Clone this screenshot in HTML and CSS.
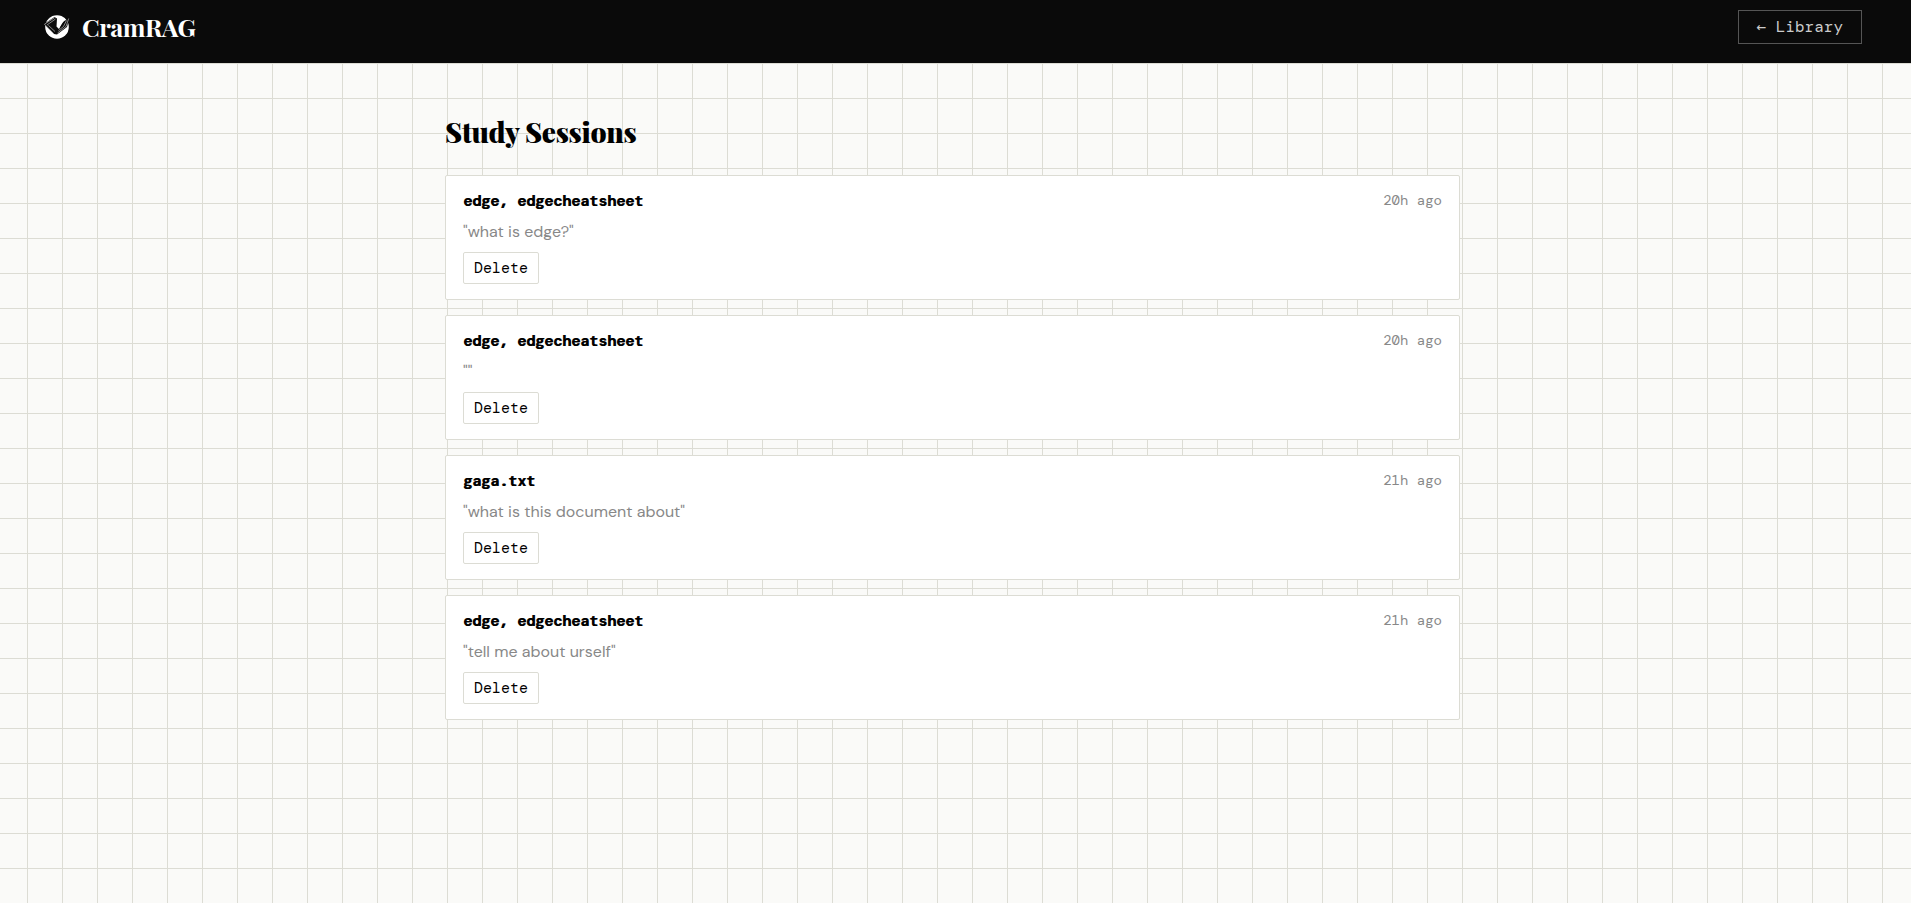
FILE: index.html
```html
<!DOCTYPE html>
<html lang="en">
<head>
<meta charset="utf-8">
<meta name="viewport" content="width=device-width, initial-scale=1">
<title>CramRAG – Study Sessions</title>
<link rel="stylesheet" href="styles.css">
</head>
<body>
<header class="topbar">
  <div class="brand">
    <svg class="brand-mark" viewBox="0 0 26 26" aria-hidden="true">
      <circle cx="13" cy="13" r="11.800" fill="#fff"/>
      <path d="M0 10 10.500 3 13 4.500 12.500 12.500 15 15 18.500 8 25.500 4 23 13 13 20.500 10 20Z" fill="#0a0a0a"/>
      <path d="M13.300 4.500 21 4 19.500 7.500 14.800 14 13.200 12Z" fill="#fff"/>
      <path d="M.5 10.200 10.500 3.800M3 11 11.500 5M.5 10.200 9.800 19.800M4.500 11.500 11 17.500M24.700 4.500 22 12.500 13.500 19M22.500 6.500 19.500 12.500 14.500 16.500" fill="none" stroke="#bbb" stroke-width=".7"/>
    </svg>
    <span class="brand-name">CramRAG</span>
  </div>
  <a class="library-link" href="#library">← Library</a>
</header>
<main class="sessions">
  <h1 class="sessions-title">Study Sessions</h1>
  <article class="card">
    <div class="card-head"><h2 class="card-title">edge, edgecheatsheet</h2><time class="card-time">20h ago</time></div>
    <p class="card-preview">"what is edge?"</p>
    <button class="delete" type="button">Delete</button>
  </article>
  <article class="card">
    <div class="card-head"><h2 class="card-title">edge, edgecheatsheet</h2><time class="card-time">20h ago</time></div>
    <p class="card-preview">""</p>
    <button class="delete" type="button">Delete</button>
  </article>
  <article class="card">
    <div class="card-head"><h2 class="card-title">gaga.txt</h2><time class="card-time">21h ago</time></div>
    <p class="card-preview">"what is this document about"</p>
    <button class="delete" type="button">Delete</button>
  </article>
  <article class="card">
    <div class="card-head"><h2 class="card-title">edge, edgecheatsheet</h2><time class="card-time">21h ago</time></div>
    <p class="card-preview">"tell me about urself"</p>
    <button class="delete" type="button">Delete</button>
  </article>
</main>
</body>
</html>
```

FILE: styles.css
```css
:root {
  --ink: #0a0a0a;
  --paper: #fafaf8;
  --line: #dcdcd4;
  --muted: #888;
  --mono: "DM Mono", "DejaVu Sans Mono", monospace;
  --sans: "DM Sans", "Open Sans", sans-serif;
  --serif: "Playfair Display", "Liberation Serif", serif;
}

* {
  box-sizing: border-box;
}

body {
  margin: 0;
  min-height: 100vh;
  padding-right: 6px;
  color: var(--ink);
  font-family: var(--sans);
  background-color: var(--paper);
  background-image:
    linear-gradient(var(--line) 1px, transparent 1px),
    linear-gradient(90deg, var(--line) 1px, transparent 1px);
  background-size: 35px 35px;
  background-position: 27px 28px;
}

.topbar {
  display: flex;
  align-items: flex-start;
  justify-content: space-between;
  margin-right: -6px;
  padding: 10px 49px 19px 44px;
  background: var(--ink);
}

.brand {
  display: flex;
  align-items: center;
  gap: 12px;
  padding-top: 1px;
}

.brand-mark {
  width: 26px;
  height: 26px;
}

.brand-name {
  color: #fff;
  font: 700 25px/32px var(--serif);
  letter-spacing: -0.02em;
}

.library-link {
  padding: 0 18px;
  border: 1px solid #555;
  color: #ccc;
  font: 16px/32px var(--mono);
  text-decoration: none;
}

.sessions {
  display: flex;
  flex-direction: column;
  gap: 15px;
  max-width: 1015px;
  margin: 0 auto;
  padding: 49px 0;
}

.sessions-title {
  margin: 0 0 8px;
  color: #000;
  font: 900 28px/40px var(--serif);
  letter-spacing: -0.01em;
}

.card {
  padding: 15px 17px;
  border: 1px solid var(--line);
  border-radius: 2px;
  background: #fff;
}

.card-head {
  display: flex;
  align-items: flex-start;
  justify-content: space-between;
}

.card-title {
  margin: 0;
  color: #000;
  font: 700 15px/20px var(--mono);
  text-shadow: 1px 0 0 #000;
}

.card-time {
  color: var(--muted);
  font: 14px/18px var(--mono);
}

.card-preview {
  margin: 8px 0 7px;
  color: var(--muted);
  font-size: 16px;
  line-height: 26px;
}

.delete {
  display: block;
  padding: 0 10px;
  border: 1px solid var(--line);
  border-radius: 2px;
  background: #fff;
  color: #000;
  font: 15px/30px var(--mono);
}
```
